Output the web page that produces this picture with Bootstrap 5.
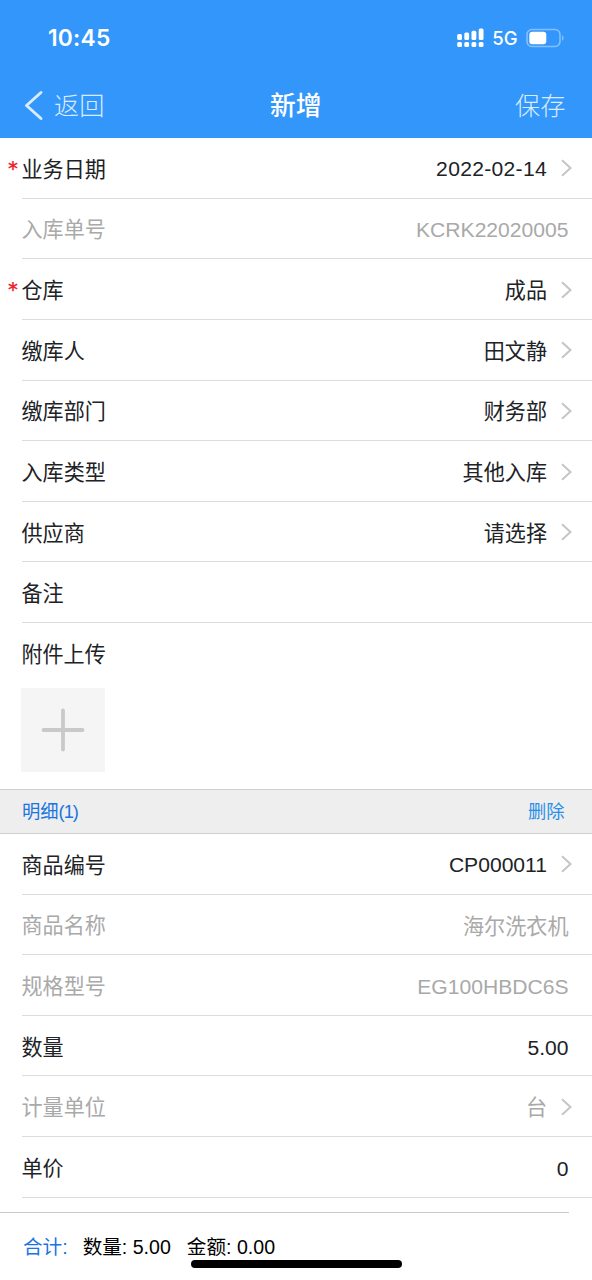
<!DOCTYPE html>
<html lang="zh-CN">
<head>
<meta charset="utf-8">
<meta name="viewport" content="width=device-width, initial-scale=1">
<title>新增</title>
<link href="https://cdn.jsdelivr.net/npm/bootstrap@5.3.0/dist/css/bootstrap.min.css" rel="stylesheet">
<style>
body{font-family:"Liberation Sans","Noto Sans CJK SC",sans-serif;font-size:21.1px;line-height:30px;color:#202226;background:#fff}
.screen{width:592px;height:1280px;overflow:hidden}
.top{height:138px;background:#3396fb;color:#fff}
.status{height:76px;padding:0 27.5px 0 48px;font-family:Inter,sans-serif}
.clock{font-size:22.8px;font-weight:600;letter-spacing:.2px}
.net{font-size:18.5px;font-weight:500}
.bar{height:60px;padding:0 26.500px 0 23px;font-size:25.2px}
.bar .side{color:#d9ecfe;font-weight:300;width:120px}
.bar .title{font-weight:500;font-size:25.8px;padding-left:3px}
.item{height:60.65px;margin-left:21.5px;padding:2px 20px 0 0;border-bottom:1.5px solid #dcdddf}
.item .name,.item .pick{padding-top:2px}
.item .value{margin-right:3.5px;padding-top:2px}
.item .cjk{padding-top:4px}
.item .arrow{margin-left:13px;margin-top:-1px}
.date{letter-spacing:.3px}
.muted{color:#a9a9a9}
.need::before{content:"*";color:#f0262d;position:absolute;left:-13.5px;top:0;font-size:19px;font-weight:700;font-family:"DejaVu Sans",sans-serif}
.upload{height:165.8px;padding:17px 0 0 21.4px}
.adder{width:84px;height:84px;background:#f5f5f5;margin-top:18px}
.section-bar{height:45px;background:#eee;border-top:1px solid #cfd0d4;border-bottom:1px solid #cfd0d4;padding:1px 27.5px 0 22px;font-size:18.3px;color:#1a74e2}
.count{letter-spacing:-1px}
.del{color:#2a8ee8}
.total{margin-top:14px;width:569px;border-top:1.5px solid #c9c9cb;padding:19px 0 0 23px;font-size:19.6px;color:#000}
.total .lead-in{color:#1a74e2;margin-right:15px}
.total .sum{margin-right:16px}
.home{width:211px;height:8px;border-radius:4px;background:#000;left:191px;top:1260px}
</style>
</head>
<body>
<svg class="d-none"><symbol id="chev" viewBox="0 0 12 18"><path d="M2 1.200 10.500 9 2 16.800" fill="none" stroke="#c5c5c9" stroke-width="2"/></symbol></svg>
<main class="screen position-relative">
  <header class="top">
    <div class="status d-flex align-items-center justify-content-between">
      <span class="clock">10:45</span>
      <div class="d-flex align-items-center">
        <svg width="28" height="20" viewBox="0 0 28 20" fill="#fff"><rect x="1.200" y="6" width="4.800" height="6" rx="1.500"/><rect x="8.300" y="4.500" width="4.800" height="7.500" rx="1.500"/><rect x="15.500" y="2.700" width="4.800" height="9.300" rx="1.500"/><rect x="22.700" y=".5" width="4.800" height="11.500" rx="1.500"/><rect x="1.200" y="14" width="4.800" height="5" rx="1.500"/><rect x="8.300" y="14" width="4.800" height="5" rx="1.500"/><rect x="15.500" y="14" width="4.800" height="5" rx="1.500"/><rect x="22.700" y="14" width="4.800" height="5" rx="1.500"/></svg>
        <span class="net ms-2 me-2">5G</span>
        <svg width="39" height="20" viewBox="0 0 39 20"><rect x="1" y="1.500" width="33" height="17" rx="5" fill="none" stroke="#85c0fd" stroke-width="1.600"/><rect x="3.300" y="3.800" width="17" height="12.500" rx="3" fill="#fff"/><path d="M36 7q3.500 3 0 6z" fill="#85c0fd"/></svg>
      </div>
    </div>
    <div class="bar d-flex align-items-center justify-content-between">
      <span class="side d-flex align-items-center"><svg width="23" height="32" viewBox="0 0 23 32"><path d="M18 2.500 3.500 15.500 18 28.500" fill="none" stroke="#d9ecfe" stroke-width="3" stroke-linecap="round" stroke-linejoin="round"/></svg><span class="ps-2">返回</span></span>
      <span class="title">新增</span>
      <span class="side text-end">保存</span>
    </div>
  </header>

  <section>
    <div class="item d-flex align-items-center"><span class="name need position-relative me-auto">业务日期</span><span class="date">2022-02-14</span><svg class="arrow" width="12" height="18"><use href="#chev"/></svg></div>
    <div class="item d-flex align-items-center muted"><span class="name me-auto">入库单号</span><span class="value">KCRK22020005</span></div>
    <div class="item d-flex align-items-center"><span class="name need position-relative me-auto">仓库</span><span class="pick">成品</span><svg class="arrow" width="12" height="18"><use href="#chev"/></svg></div>
    <div class="item d-flex align-items-center"><span class="name me-auto">缴库人</span><span class="pick">田文静</span><svg class="arrow" width="12" height="18"><use href="#chev"/></svg></div>
    <div class="item d-flex align-items-center"><span class="name me-auto">缴库部门</span><span class="pick">财务部</span><svg class="arrow" width="12" height="18"><use href="#chev"/></svg></div>
    <div class="item d-flex align-items-center"><span class="name me-auto">入库类型</span><span class="pick">其他入库</span><svg class="arrow" width="12" height="18"><use href="#chev"/></svg></div>
    <div class="item d-flex align-items-center"><span class="name me-auto">供应商</span><span class="pick">请选择</span><svg class="arrow" width="12" height="18"><use href="#chev"/></svg></div>
    <div class="item d-flex align-items-center"><span class="name">备注</span></div>
    <div class="upload">
      <div>附件上传</div>
      <div class="adder d-flex align-items-center justify-content-center"><svg width="44" height="44" viewBox="0 0 44 44"><path d="M22 2.500v39M2.500 22h39" stroke="#c9c9c9" stroke-width="3.800" stroke-linecap="round"/></svg></div>
    </div>
  </section>

  <div class="section-bar d-flex align-items-center justify-content-between"><span>明细<span class="count">(1)</span></span><span class="del">删除</span></div>

  <section>
    <div class="item d-flex align-items-center"><span class="name me-auto">商品编号</span><span>CP000011</span><svg class="arrow" width="12" height="18"><use href="#chev"/></svg></div>
    <div class="item d-flex align-items-center muted"><span class="name me-auto">商品名称</span><span class="value cjk">海尔洗衣机</span></div>
    <div class="item d-flex align-items-center muted"><span class="name me-auto">规格型号</span><span class="value">EG100HBDC6S</span></div>
    <div class="item d-flex align-items-center"><span class="name me-auto">数量</span><span class="value">5.00</span></div>
    <div class="item d-flex align-items-center muted"><span class="name me-auto">计量单位</span><span class="pick">台</span><svg class="arrow" width="12" height="18"><use href="#chev"/></svg></div>
    <div class="item d-flex align-items-center"><span class="name me-auto">单价</span><span class="value">0</span></div>
  </section>

  <footer class="total d-flex"><span class="lead-in">合计:</span><span class="sum">数量: 5.00</span><span>金额: 0.00</span></footer>
  <div class="home position-absolute"></div>
</main>
<script src="https://cdn.jsdelivr.net/npm/bootstrap@5.3.0/dist/js/bootstrap.bundle.min.js"></script>
</body>
</html>
